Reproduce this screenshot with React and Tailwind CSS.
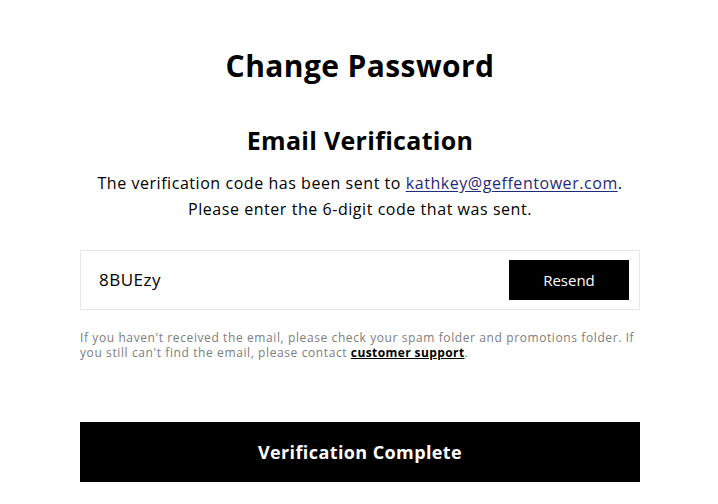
export default function App() {
  return (
    <div className="flex min-h-screen justify-center bg-white pl-[2px] font-['Open_Sans',sans-serif] text-black">
      <div className="w-[560px] pt-[47px]">
        <h1 className="text-center text-[30px] font-bold leading-[38px] tracking-[0.4px]">
          Change Password
        </h1>
        <h2 className="mt-[39px] text-center text-[25px] font-bold leading-[32px] tracking-[0.3px]">
          Email Verification
        </h2>
        <p className="mt-[14px] text-center text-[16px] leading-[26px] tracking-[0.55px]">
          The verification code has been sent to{" "}
          <a href="#" className="text-[#1f2a7a] underline underline-offset-2">
            kathkey@geffentower.com
          </a>
          .
          <br />
          Please enter the 6-digit code that was sent.
        </p>
        <div className="mt-[28px] flex h-[60px] items-center border border-[#e8e8e8] pl-[18px] pr-[10px]">
          <input
            className="min-w-0 flex-1 bg-transparent text-[17px] tracking-[0.5px] outline-none"
            defaultValue="8BUEzy"
          />
          <button className="h-[40px] w-[120px] bg-black text-[15px] text-white">Resend</button>
        </div>
        <p className="mt-[20px] text-[12px] leading-[15px] tracking-[0.6px] text-[#7d7d7d]">
          If you haven't received the email, please check your spam folder and promotions folder. If
          you still can't find the email, please contact{" "}
          <a
            href="#"
            className="inline-block font-bold leading-[15px] tracking-[0.4px] text-black underline underline-offset-1"
          >
            customer support
          </a>
          .
        </p>
        <button className="mt-[62px] h-[60px] w-full bg-black text-[18px] font-bold tracking-[0.4px] text-white">
          Verification Complete
        </button>
      </div>
    </div>
  );
}
